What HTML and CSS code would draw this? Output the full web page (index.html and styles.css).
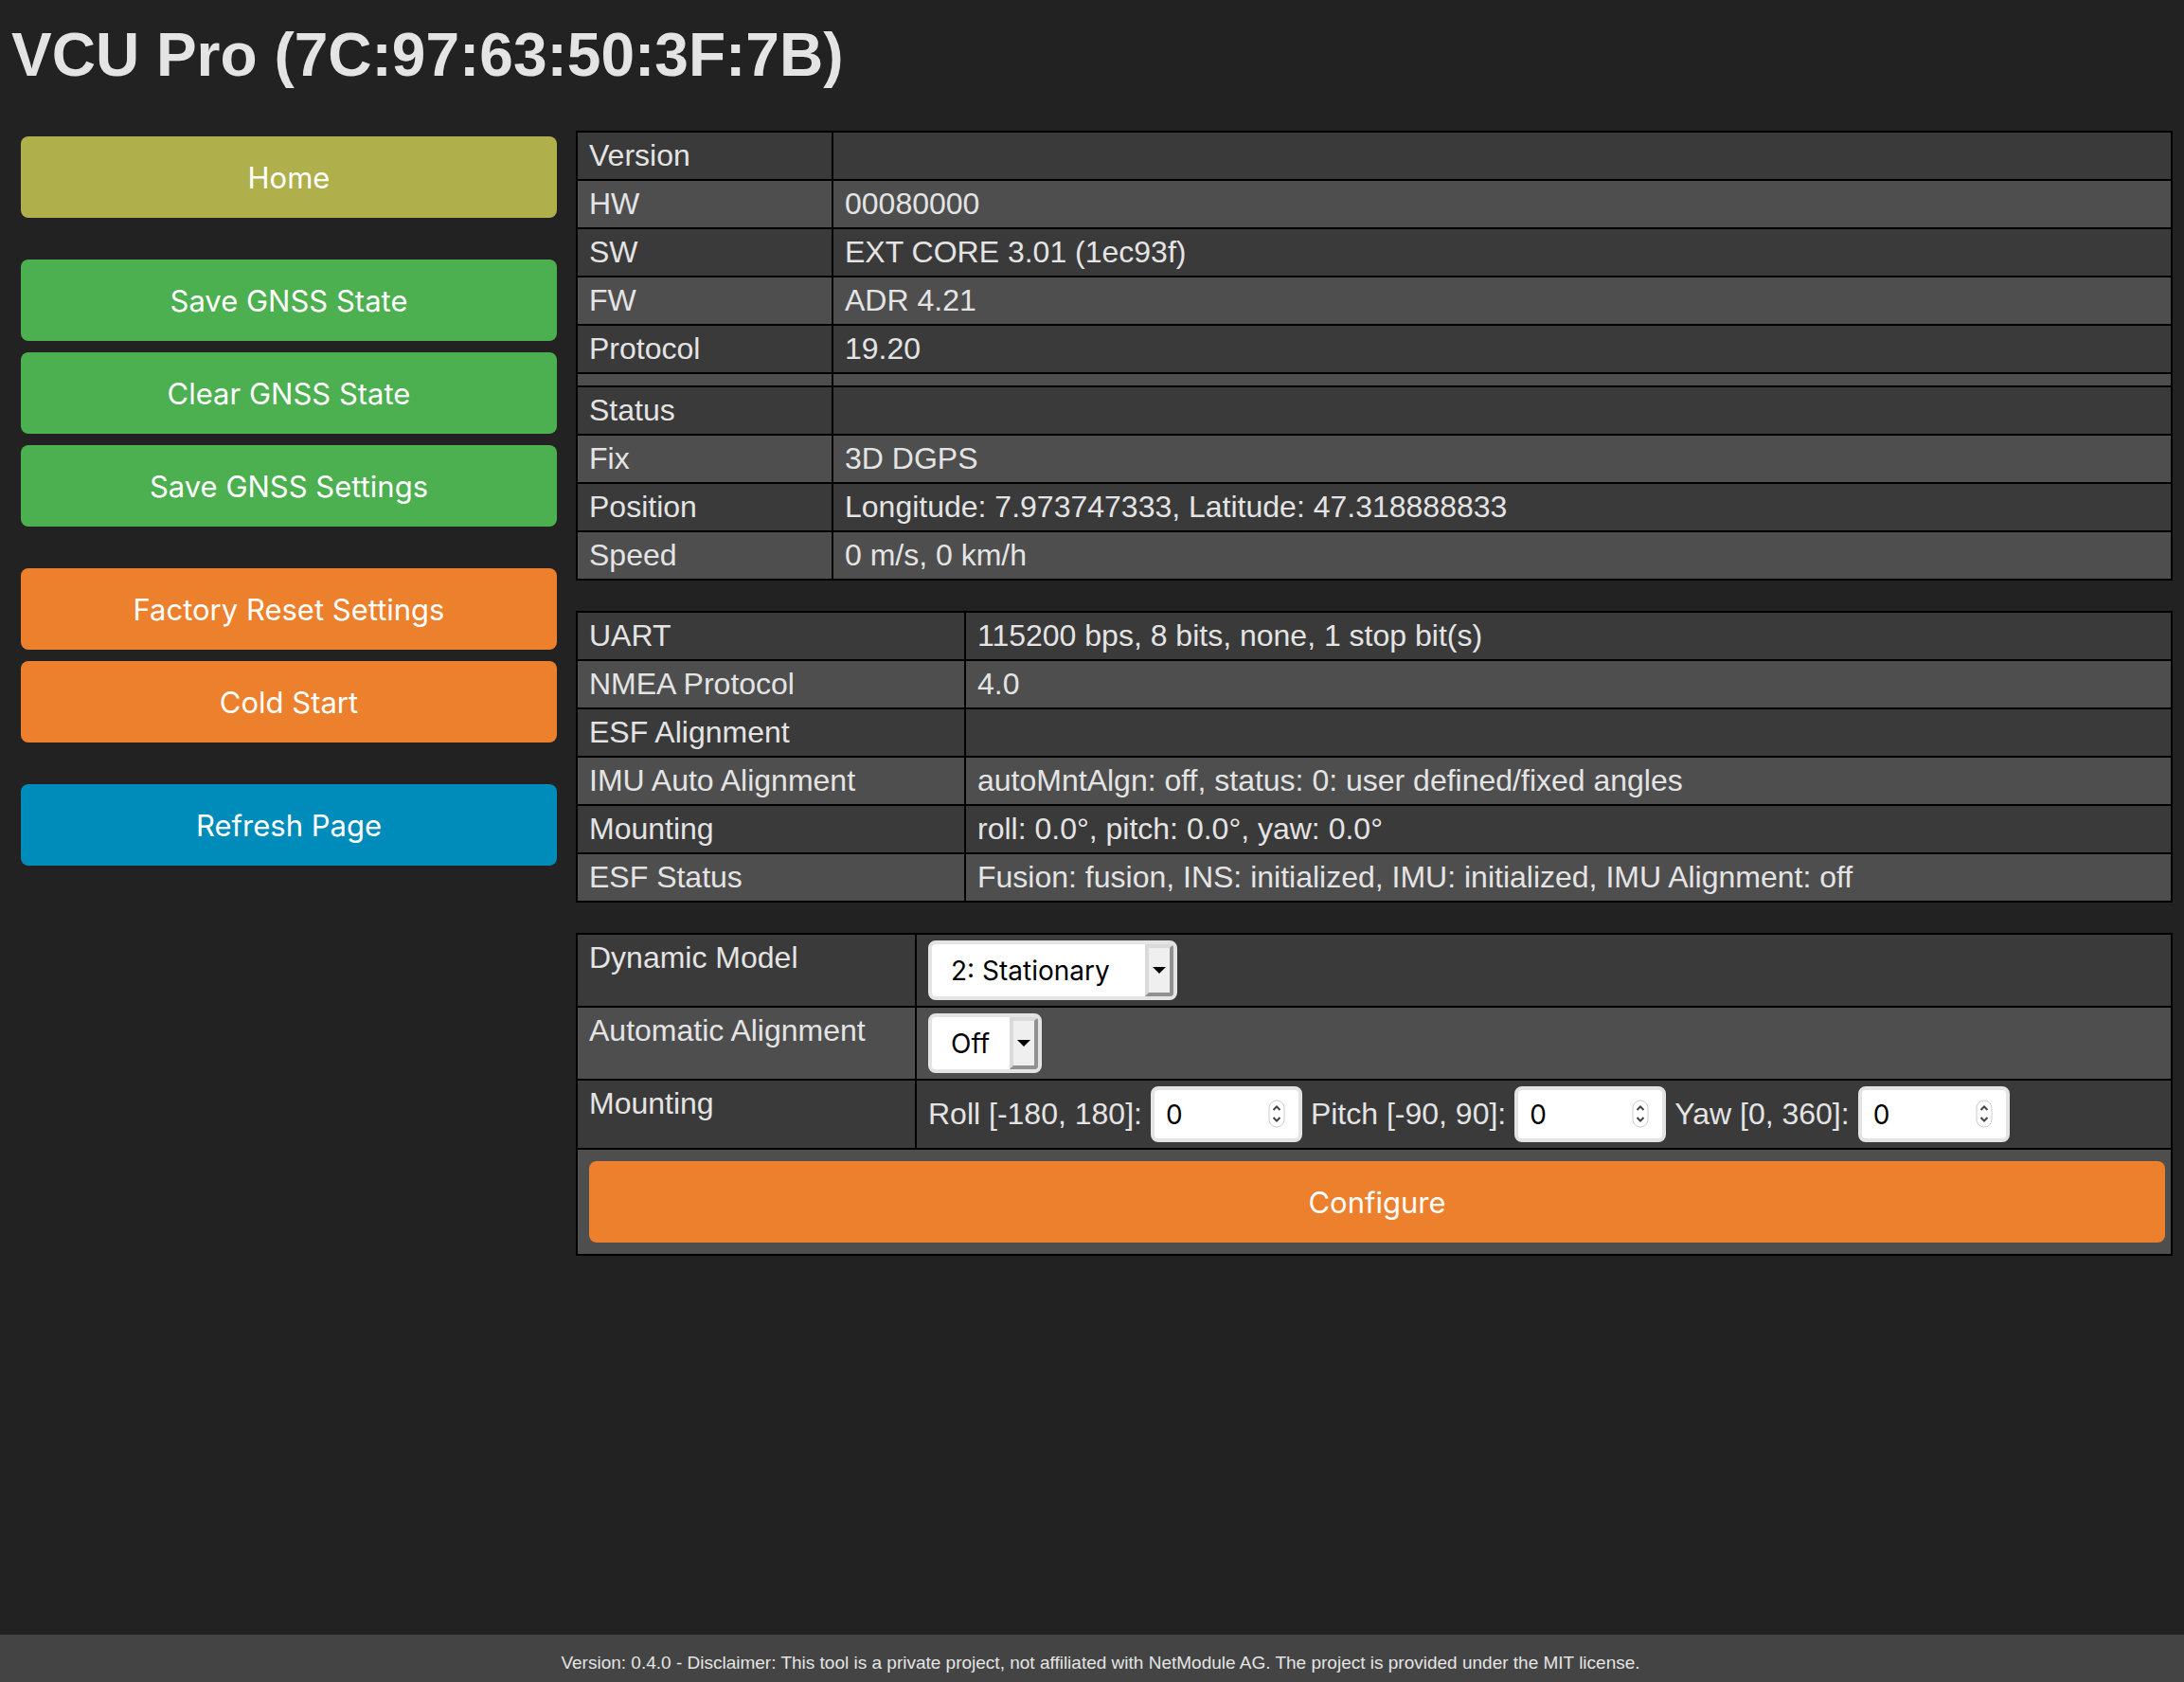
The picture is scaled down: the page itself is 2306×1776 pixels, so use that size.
FILE: index.html
```html
<!DOCTYPE html>
<html lang="en">
<head>
<meta charset="utf-8">
<meta name="viewport" content="width=device-width, initial-scale=1">
<title>VCU Pro</title>
<link rel="stylesheet" href="styles.css">
</head>
<body>
<h1 class="title">VCU Pro (7C:97:63:50:3F:7B)</h1>
<div class="layout">
  <nav class="sidebar">
    <div class="group">
      <button type="button" class="btn btn-home">Home</button>
    </div>
    <div class="group">
      <button type="button" class="btn btn-save">Save GNSS State</button>
      <button type="button" class="btn btn-save">Clear GNSS State</button>
      <button type="button" class="btn btn-save">Save GNSS Settings</button>
    </div>
    <div class="group">
      <button type="button" class="btn btn-warn">Factory Reset Settings</button>
      <button type="button" class="btn btn-warn">Cold Start</button>
    </div>
    <div class="group">
      <button type="button" class="btn btn-refresh">Refresh Page</button>
    </div>
  </nav>
  <main class="content">
    <table class="data">
      <colgroup><col class="col-status"><col></colgroup>
      <tbody>
        <tr><th scope="row">Version</th><td></td></tr>
        <tr><th scope="row">HW</th><td>00080000</td></tr>
        <tr><th scope="row">SW</th><td>EXT CORE 3.01 (1ec93f)</td></tr>
        <tr><th scope="row">FW</th><td>ADR 4.21</td></tr>
        <tr><th scope="row">Protocol</th><td>19.20</td></tr>
        <tr><td></td><td></td></tr>
        <tr><th scope="row">Status</th><td></td></tr>
        <tr><th scope="row">Fix</th><td>3D DGPS</td></tr>
        <tr><th scope="row">Position</th><td>Longitude: 7.973747333, Latitude: 47.318888833</td></tr>
        <tr><th scope="row">Speed</th><td>0 m/s, 0 km/h</td></tr>
      </tbody>
    </table>
    <table class="data">
      <colgroup><col class="col-sensor"><col></colgroup>
      <tbody>
        <tr><th scope="row">UART</th><td>115200 bps, 8 bits, none, 1 stop bit(s)</td></tr>
        <tr><th scope="row">NMEA Protocol</th><td>4.0</td></tr>
        <tr><th scope="row">ESF Alignment</th><td></td></tr>
        <tr><th scope="row">IMU Auto Alignment</th><td>autoMntAlgn: off, status: 0: user defined/fixed angles</td></tr>
        <tr><th scope="row">Mounting</th><td>roll: 0.0°, pitch: 0.0°, yaw: 0.0°</td></tr>
        <tr><th scope="row">ESF Status</th><td>Fusion: fusion, INS: initialized, IMU: initialized, IMU Alignment: off</td></tr>
      </tbody>
    </table>
    <form>
      <table class="data">
        <colgroup><col class="col-form"><col></colgroup>
        <tbody>
          <tr>
            <th scope="row"><label for="model">Dynamic Model</label></th>
            <td><span class="picker"><select id="model" class="select select-model"><option>2: Stationary</option></select></span></td>
          </tr>
          <tr>
            <th scope="row"><label for="align">Automatic Alignment</label></th>
            <td><span class="picker"><select id="align" class="select select-align"><option>Off</option><option>On</option></select></span></td>
          </tr>
          <tr>
            <th scope="row">Mounting</th>
            <td>
              <div class="angles">
                <label for="roll">Roll [-180, 180]:</label>
                <span class="number"><input id="roll" type="number" min="-180" max="180" value="0"><svg class="stepper" viewBox="0 0 18 30" aria-hidden="true"><rect x="1" y="1" width="16" height="28" rx="8"/><path d="M5.500 11 9 7.500 12.500 11M5.500 19 9 22.500 12.500 19"/></svg></span>
                <label for="pitch">Pitch [-90, 90]:</label>
                <span class="number"><input id="pitch" type="number" min="-90" max="90" value="0"><svg class="stepper" viewBox="0 0 18 30" aria-hidden="true"><rect x="1" y="1" width="16" height="28" rx="8"/><path d="M5.500 11 9 7.500 12.500 11M5.500 19 9 22.500 12.500 19"/></svg></span>
                <label for="yaw">Yaw [0, 360]:</label>
                <span class="number"><input id="yaw" type="number" min="0" max="360" value="0"><svg class="stepper" viewBox="0 0 18 30" aria-hidden="true"><rect x="1" y="1" width="16" height="28" rx="8"/><path d="M5.500 11 9 7.500 12.500 11M5.500 19 9 22.500 12.500 19"/></svg></span>
              </div>
            </td>
          </tr>
          <tr>
            <td colspan="2" class="submit"><button type="submit" class="btn btn-warn">Configure</button></td>
          </tr>
        </tbody>
      </table>
    </form>
  </main>
</div>
<footer class="footer">Version: 0.4.0 - Disclaimer: This tool is a private project, not affiliated with NetModule AG. The project is provided under the MIT license.</footer>
</body>
</html>
```
FILE: styles.css
```css
*,
*::before,
*::after {
  box-sizing: border-box;
}

body {
  display: flex;
  flex-direction: column;
  min-height: 100vh;
  margin: 0;
  background: #222;
  color: #e4e4e4;
  font: 32px/37px "Liberation Sans", Arial, sans-serif;
}

.title {
  margin: 21px 12px 43px;
  font-size: 64px;
  line-height: 74px;
}

.layout {
  display: grid;
  grid-template-columns: minmax(0, 283fr) minmax(0, 843fr);
  gap: 20px;
  flex: 1;
  align-items: start;
  padding: 0 12px 32px 22px;
}

.sidebar {
  display: flex;
  flex-direction: column;
  gap: 44px;
  padding-top: 6px;
}

.group {
  display: flex;
  flex-direction: column;
  gap: 12px;
}

.btn {
  display: block;
  width: 100%;
  height: 86px;
  padding: 2px 20px 0;
  border: 0;
  border-radius: 8px;
  color: #fff;
  font: 31px/38px Inter, sans-serif;
  cursor: pointer;
}

.btn-home { background: #afaf4c; }
.btn-save { background: #4caf50; }
.btn-warn { background: #ec802c; }
.btn-refresh { background: #008cba; }

.content {
  display: flex;
  flex-direction: column;
  gap: 32px;
}

.data {
  width: 100%;
  table-layout: fixed;
  border-collapse: collapse;
}

.col-status { width: 270px; }
.col-sensor { width: 410px; }
.col-form { width: 358px; }

.data th,
.data td {
  padding: 6px 6px 6px 12px;
  border: 2px solid #000;
  font-weight: normal;
  text-align: left;
  vertical-align: top;
}

.data tr:nth-child(odd) { background: #3a3a3a; }
.data tr:nth-child(even) { background: #4e4e4e; }

.data .submit {
  padding-top: 12px;
  padding-bottom: 12px;
}

.picker,
.number {
  display: inline-block;
  position: relative;
  vertical-align: top;
}

.select,
.number input {
  display: block;
  margin: 0;
  border: 4px solid #e4e4e4;
  border-radius: 8px;
  background: #fff;
  color: #000;
  font: 28px/34px Inter, sans-serif;
}

.select {
  height: 63px;
  padding: 0 40px 0 20px;
  appearance: none;
}

.select-model { width: 263px; }
.select-align { width: 120px; }

/* Raised arrow box at the right edge of a drop-down */
.picker::before {
  content: "";
  position: absolute;
  top: 4px;
  right: 4px;
  bottom: 4px;
  width: 30px;
  border: 4px solid;
  border-color: #dadada #919191 #919191 #dadada;
  border-top-right-radius: 4px;
  border-bottom-right-radius: 4px;
  background: #efefef;
  pointer-events: none;
}

.picker::after {
  content: "";
  position: absolute;
  top: 28px;
  right: 12px;
  border: 7px solid transparent;
  border-top-color: #000;
  border-bottom: 0;
  pointer-events: none;
}

.angles {
  display: flex;
  flex-wrap: wrap;
  align-items: center;
  gap: 9px;
}

.number input {
  width: 160px;
  height: 59px;
  padding: 0 36px 0 12px;
  appearance: textfield;
}

.number input::-webkit-inner-spin-button {
  display: none;
}

.stepper {
  position: absolute;
  top: 14px;
  right: 18px;
  width: 18px;
  height: 30px;
  fill: none;
  pointer-events: none;
}

.stepper rect {
  fill: #fff;
  stroke: #ccc;
}

.stepper path {
  stroke: #444;
  stroke-width: 2;
}

.footer {
  padding: 18px 0 9px 18px;
  background: #444;
  font-size: 19px;
  line-height: 23px;
  text-align: center;
}
```
